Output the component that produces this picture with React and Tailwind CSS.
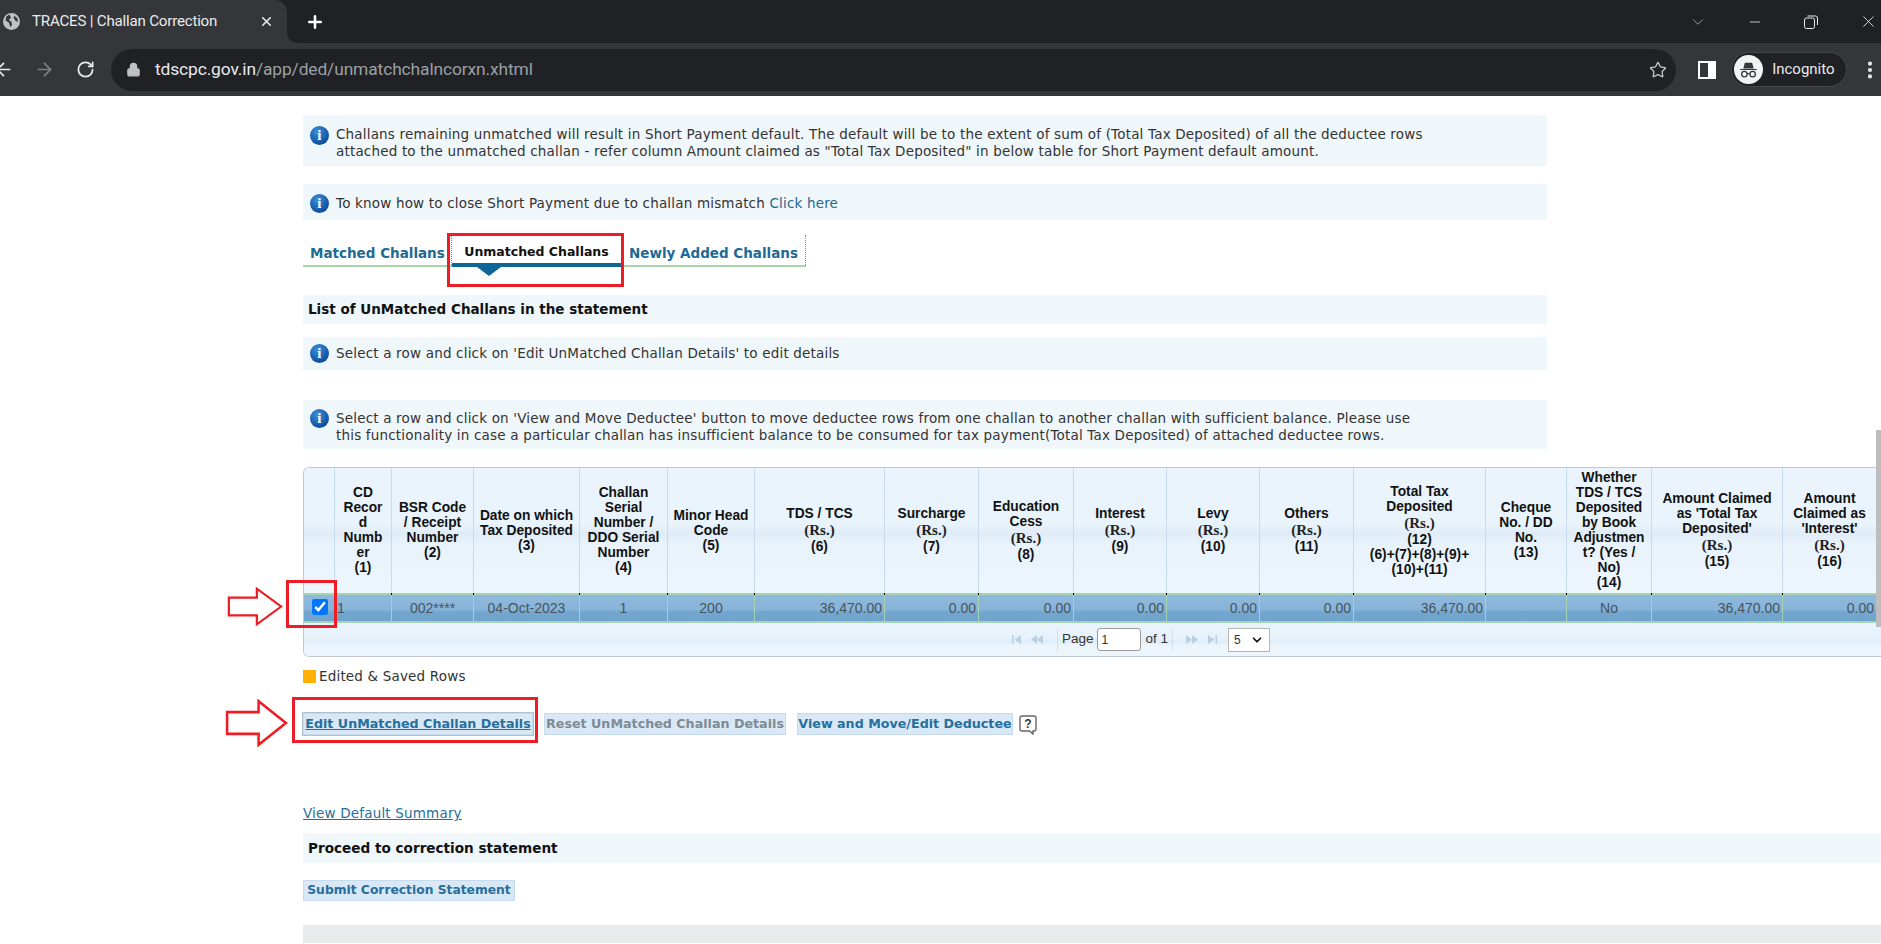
import React from 'react'
import { ArrowLeft, ArrowRight, ChevronDown, EllipsisVertical, Lock, Minus, Plus, RotateCw, Star, X } from 'lucide-react'

const heads = [
  { w: 'w-[31px]', lines: [] },
  { w: 'w-[57px]', lines: ['CD', 'Recor', 'd', 'Numb', 'er', '(1)'] },
  { w: 'w-[82px]', lines: ['BSR Code', '/ Receipt', 'Number', '(2)'] },
  { w: 'w-[106px]', lines: ['Date on which', 'Tax Deposited', '(3)'] },
  { w: 'w-[88px]', lines: ['Challan', 'Serial', 'Number /', 'DDO Serial', 'Number', '(4)'] },
  { w: 'w-[87px]', lines: ['Minor Head', 'Code', '(5)'] },
  { w: 'w-[130px]', lines: ['TDS / TCS', 'Rs', '(6)'] },
  { w: 'w-[94px]', lines: ['Surcharge', 'Rs', '(7)'] },
  { w: 'w-[95px]', lines: ['Education', 'Cess', 'Rs', '(8)'] },
  { w: 'w-[93px]', lines: ['Interest', 'Rs', '(9)'] },
  { w: 'w-[93px]', lines: ['Levy', 'Rs', '(10)'] },
  { w: 'w-[94px]', lines: ['Others', 'Rs', '(11)'] },
  { w: 'w-[132px]', lines: ['Total Tax', 'Deposited', 'Rs', '(12)', '(6)+(7)+(8)+(9)+', '(10)+(11)'] },
  { w: 'w-[81px]', lines: ['Cheque', 'No. / DD', 'No.', '(13)'] },
  { w: 'w-[85px]', lines: ['Whether', 'TDS / TCS', 'Deposited', 'by Book', 'Adjustmen', 't? (Yes /', 'No)', '(14)'] },
  { w: 'w-[131px]', lines: ['Amount Claimed', "as 'Total Tax", "Deposited'", 'Rs', '(15)'] },
  { w: 'w-[94px]', lines: ['Amount', 'Claimed as', "'Interest'", 'Rs', '(16)'] },
]

const row = [
  { v: '1', a: 'text-left pl-[2px]' },
  { v: '002****', a: 'text-center' },
  { v: '04-Oct-2023', a: 'text-center' },
  { v: '1', a: 'text-center' },
  { v: '200', a: 'text-center' },
  { v: '36,470.00', a: 'text-right pr-[2px]' },
  { v: '0.00', a: 'text-right pr-[2px]' },
  { v: '0.00', a: 'text-right pr-[2px]' },
  { v: '0.00', a: 'text-right pr-[2px]' },
  { v: '0.00', a: 'text-right pr-[2px]' },
  { v: '0.00', a: 'text-right pr-[2px]' },
  { v: '36,470.00', a: 'text-right pr-[2px]' },
  { v: '', a: 'text-center' },
  { v: 'No', a: 'text-center' },
  { v: '36,470.00', a: 'text-right pr-[2px]' },
  { v: '0.00', a: 'text-right pr-[2px]' },
]

function InfoIcon({ className = '' }) {
  return (
    <span className={`flex h-[19px] w-[19px] shrink-0 items-center justify-center rounded-full bg-[radial-gradient(circle_at_40%_30%,#3f8fd8,#0b4c9c_75%)] font-['Liberation_Serif',serif] text-[15px] font-bold leading-none text-white ${className}`}>
      i
    </span>
  )
}

function InfoBox({ className, children }) {
  return (
    <div className={`flex w-[1244px] gap-[7px] bg-[#f0f7fb] pl-[7px] text-[13.5px] leading-[17px] tracking-[0.18px] text-[#333] ${className}`}>
      {children}
    </div>
  )
}

function Arrow({ className }) {
  return (
    <svg className={`absolute ${className}`} viewBox="0 0 60 44" preserveAspectRatio="none" fill="#fff" stroke="#ee1c25" strokeWidth="2.4">
      <path d="M2 12 H32 V2 L58 22 L32 42 V32 H2 Z" />
    </svg>
  )
}

function ActionButton({ className, children }) {
  return (
    <span className={`flex h-[22px] items-center justify-center whitespace-nowrap border border-[#c6dcee] bg-[#d9e8f6] text-[12.7px] font-bold ${className}`}>
      {children}
    </span>
  )
}

function PagerArrows({ flip }) {
  return (
    <svg className={`h-[9px] w-[36px] ${flip ? 'rotate-180' : ''}`} viewBox="0 0 36 9" fill="#b9cfe2">
      <path d="M0 0 H1.5 V9 H0 Z M9 0 V9 L2.5 4.5 Z M25 0 V9 L19 4.5 Z M31 0 V9 L25 4.5 Z" />
    </svg>
  )
}

export default function App() {
  return (
    <div className="relative h-[944px] w-full overflow-hidden bg-white font-['DejaVu_Sans',sans-serif]">
      {/* browser chrome */}
      <div className="flex h-[43px] bg-[linear-gradient(#202124_50%,#35363a_50%)] font-['Roboto',sans-serif] text-white">
        <div className="flex w-[287px] items-center rounded-tr-[12px] bg-[#35363a]">
          <svg className="ml-[3px] h-[17px] w-[17px]" viewBox="0 0 16 16">
            <circle cx="8" cy="8" r="8" fill="#bdc1c6" />
            <path d="M6 1.5 L3 3.5 L2.5 7 L5.5 9 L7 13.5 L8.5 11 L8 8.5 L5.5 6.5 L7.5 4.5 Z M10.5 2.5 L13.5 5 L14 8.5 L11.5 7 L10 4.5 Z" fill="#35363a" />
          </svg>
          <span className="ml-[12px] w-[226px] whitespace-nowrap text-[15.1px] tracking-[-0.2px] text-[#e8eaed]">TRACES | Challan Correction</span>
          <X className="ml-[1px] h-[15px] w-[15px] text-[#e8eaed]" strokeWidth={2.5} />
        </div>
        <div className="flex flex-1 items-center rounded-bl-[10px] bg-[#202124]">
          <Plus className="ml-[18px] h-[20px] w-[20px]" strokeWidth={3} />
          <ChevronDown className="ml-[1364px] h-[18px] w-[18px] text-[#bdc1c6]" strokeWidth={1} />
          <Minus className="ml-[40px] h-[16px] w-[16px] text-[#e8eaed]" strokeWidth={1.2} />
          <svg className="ml-[41px] h-[14px] w-[14px]" viewBox="0 0 14 14" fill="none" stroke="#e8eaed" strokeWidth="1">
            <rect x="0.5" y="3" width="10" height="10.5" rx="2" />
            <path d="M3.5 1 H11.5 Q13.5 1 13.5 3 V10" />
          </svg>
          <X className="ml-[41px] h-[19px] w-[19px] text-[#e8eaed]" strokeWidth={1.1} />
        </div>
      </div>
      <div className="flex h-[53px] items-center bg-[#35363a] font-['Roboto',sans-serif] text-[#e8eaed]">
        <ArrowLeft className="ml-[-7px] h-[21px] w-[21px]" strokeWidth={2} />
        <ArrowRight className="ml-[20px] h-[21px] w-[21px] text-[#7d8085]" strokeWidth={2} />
        <RotateCw className="ml-[21px] h-[19px] w-[19px]" strokeWidth={2.2} />
        <div className="ml-[16px] flex h-[42px] w-[1567px] items-center rounded-full bg-[#202124]">
          <Lock className="ml-[15px] h-[15px] w-[15px] text-[#bdc1c6]" fill="#bdc1c6" />
          <span className="ml-[14px] whitespace-nowrap text-[17.4px] tracking-[-0.12px]">
            tdscpc.gov.in<span className="text-[#9aa0a6]">/app/ded/unmatchchalncorxn.xhtml</span>
          </span>
          <Star className="ml-auto mr-[9px] h-[18px] w-[18px] text-[#c4c7c5]" strokeWidth={1.8} />
        </div>
        <span className="ml-[22px] flex h-[18px] w-[18px] justify-start border-[2px] border-r-[8px] border-white" />
        <div className="ml-[15px] flex h-[35px] w-[116px] items-center rounded-full border border-[#44464a] bg-[#202124] pl-[2px]">
          <svg className="h-[29px] w-[29px]" viewBox="0 0 28 28">
            <circle cx="14" cy="14" r="14" fill="#f1f3f4" />
            <path d="M6 13.5 H22 V14.5 H6 Z M9 13 L10.5 7.5 H17.5 L19 13 Z" fill="#35363a" />
            <circle cx="10" cy="18.5" r="2.6" fill="none" stroke="#35363a" strokeWidth="1.2" />
            <circle cx="18" cy="18.5" r="2.6" fill="none" stroke="#35363a" strokeWidth="1.2" />
            <path d="M12.6 18 H15.4" stroke="#35363a" strokeWidth="1.2" />
          </svg>
          <span className="ml-[9px] text-[15px]">Incognito</span>
        </div>
        <EllipsisVertical className="ml-[12px] h-[22px] w-[22px]" strokeWidth={2.6} />
      </div>

      {/* page */}
      <div className="ml-[303px] flex flex-col">
        <InfoBox className="mt-[19px] h-[51px] pt-[11px]">
          <InfoIcon />
          <p>
            Challans remaining unmatched will result in Short Payment default. The default will be to the extent of sum of (Total Tax Deposited) of all the deductee rows<br />
            attached to the unmatched challan - refer column Amount claimed as "Total Tax Deposited" in below table for Short Payment default amount.
          </p>
        </InfoBox>
        <InfoBox className="mt-[18px] h-[36px] items-center pt-[2px]">
          <InfoIcon />
          <p>To know how to close Short Payment due to challan mismatch <span className="text-[#1d6a94]">Click here</span></p>
        </InfoBox>

        <div className="relative mt-[15px] flex h-[32px] w-[503px] items-start border-b-[2px] border-[#a9d4a9] text-[13.5px] font-bold text-[#1d6a94]">
          <span className="h-[30px] w-[149px] whitespace-nowrap border-r border-dotted border-[#888] pl-[7px] pt-[8px]">Matched Challans</span>
          <span className="relative h-[32px] w-[169px] border-b-[4px] border-[#0e6698] pt-[8px] text-center text-[12.5px] text-[#111]">
            Unmatched Challans
            <span className="absolute left-[25px] top-[32px] h-0 w-0 border-x-[12px] border-t-[9px] border-x-transparent border-t-[#0e6698]" />
          </span>
          <span className="h-[30px] flex-1 whitespace-nowrap border-r border-dotted border-[#888] pl-[8px] pt-[8px]">Newly Added Challans</span>
        </div>

        <div className="mt-[28px] flex h-[29px] w-[1244px] items-center bg-[#f0f7fb] pl-[5px] text-[13.5px] font-bold text-[#111]">List of UnMatched Challans in the statement</div>
        <InfoBox className="mt-[13px] h-[33px] items-center">
          <InfoIcon />
          <p>Select a row and click on 'Edit UnMatched Challan Details' to edit details</p>
        </InfoBox>
        <InfoBox className="mt-[30px] h-[49px] pt-[10px]">
          <InfoIcon className="mt-[-1px]" />
          <p>
            Select a row and click on 'View and Move Deductee' button to move deductee rows from one challan to another challan with sufficient balance. Please use<br />
            this functionality in case a particular challan has insufficient balance to be consumed for tax payment(Total Tax Deposited) of attached deductee rows.
          </p>
        </InfoBox>

        {/* table */}
        <div className="mt-[18px] w-[1578px] overflow-hidden rounded-l-[6px] border-y border-l border-[#c3cad1] font-['Liberation_Sans',sans-serif]">
          <div className="flex h-[125px] w-[1573px] bg-[linear-gradient(#ebf4fc_0%,#e9f3fc_45%,#dfecf7_52%,#e8f2fb_60%,#eef6fd_100%)]">
            {heads.map((h, i) => (
              <div key={i} className={`flex h-full flex-col items-center justify-center border-r border-[#c9dbea] pb-[1px] text-center text-[13.75px] font-bold leading-[15px] text-[#111] ${h.w}`}>
                {h.lines.map((l, j) => l === 'Rs'
                  ? <span key={j} className="font-['Liberation_Serif',serif] text-[15px] leading-[18px] text-[#222]">(Rs.)</span>
                  : <span key={j} className="whitespace-nowrap">{l}</span>)}
              </div>
            ))}
          </div>
          <div className="flex h-[30px] w-[1573px] border-y-[2px] border-[#a6d3b4] bg-[linear-gradient(#8fb9dc_0%,#88b4d9_55%,#74a7d0_65%,#70a3cc_100%)] text-[14px] text-[#46545f]">
            <div className="relative flex w-[31px] items-center justify-center border-r border-[#a6d3b4] pb-[2px] pl-[1px] after:absolute after:right-[-1px] after:top-[-2px] after:h-[2px] after:w-[1px] after:bg-black">
              <input type="checkbox" defaultChecked className="h-[16px] w-[16px] accent-[#0075ff]" />
            </div>
            {row.map((c, i) => (
              <div key={i} className={`relative h-full border-r border-[#a6d3b4] leading-[26px] after:absolute after:right-[-1px] after:top-[-2px] after:h-[2px] after:w-[1px] after:bg-black ${heads[i + 1].w} ${c.a}`}>{c.v}</div>
            ))}
          </div>
          <div className="flex h-[33px] items-center bg-[linear-gradient(#e9f3fc_0%,#e8f2fb_45%,#dfecf7_55%,#edf5fc_70%,#eef6fd_100%)] pl-[708px] text-[13.5px] text-[#333]">
            <PagerArrows />
            <span className="ml-[9px] h-[22px] border-l border-[#d3e0ec]" />
            <span className="ml-[4px]">Page</span>
            <span className="ml-[3px] flex h-[23px] w-[44px] items-center rounded-[3px] border border-[#9a9a9a] bg-white pl-[4px] text-[12px]">1</span>
            <span className="ml-[5px]">of 1</span>
            <span className="ml-[4px] h-[22px] border-l border-[#d3e0ec]" />
            <span className="ml-[8px]"><PagerArrows flip /></span>
            <span className="ml-[11px] flex h-[24px] w-[42px] items-center justify-between border border-[#b5b5b5] bg-white px-[5px] text-[12px]">
              5 <ChevronDown className="h-[14px] w-[14px] text-[#111]" strokeWidth={3} />
            </span>
          </div>
        </div>

        <div className="mt-[13px] flex h-[13px] items-center text-[13.5px] tracking-[0.18px] text-[#333]">
          <span className="h-[13px] w-[13px] bg-[#ffb000]" />
          <span className="ml-[3px]">Edited &amp; Saved Rows</span>
        </div>

        <div className="mt-[29px] flex items-center text-[#266f9c]">
          <ActionButton className="w-[230px] border-[#33648f] underline outline outline-1 outline-[#33648f]/40">Edit UnMatched Challan Details</ActionButton>
          <ActionButton className="ml-[11px] w-[242px] text-[#808a92]">Reset UnMatched Challan Details</ActionButton>
          <ActionButton className="ml-[11px] w-[216px]">View and Move/Edit Deductee</ActionButton>
          <svg className="ml-[6px] mt-[3px] h-[20px] w-[18px]" viewBox="0 0 18 20" fill="#fff" stroke="#666" strokeWidth="1.4">
            <path d="M3 1 H15 Q17 1 17 3 V14 Q17 16 15 16 H14 V19 L10.5 16 H3 Q1 16 1 14 V3 Q1 1 3 1 Z" />
            <text x="9" y="13" textAnchor="middle" fontSize="12" fontWeight="700" fill="#333" stroke="none" fontFamily="'Liberation Sans', sans-serif">?</text>
          </svg>
        </div>

        <a className="mt-[70px] text-[13.5px] leading-[16px] tracking-[0.18px] text-[#266f9c] underline">View Default Summary</a>
        <div className="mt-[12px] flex h-[30px] items-center bg-[#f0f7fb] pl-[5px] text-[13.6px] font-bold text-[#111]">Proceed to correction statement</div>
        <span className="mt-[17px] flex h-[21px] w-[212px] items-center justify-center whitespace-nowrap border border-[#c6dcee] bg-[#d9e8f6] text-[12.3px] font-bold text-[#266f9c]">Submit Correction Statement</span>
        <div className="mt-[24px] h-[18px] bg-[#e9eaec]" />
      </div>

      {/* scrollbar thumb */}
      <div className="absolute right-0 top-[430px] h-[197px] w-[5px] bg-[#bdbdbd]" />

      {/* annotations drawn over the page */}
      <div className="absolute left-[447px] top-[233px] h-[54px] w-[177px] border-[3px] border-[#ee1c25]" />
      <div className="absolute left-[286px] top-[580px] h-[48px] w-[51px] border-[3px] border-[#ee1c25]" />
      <div className="absolute left-[292px] top-[697px] h-[46px] w-[246px] border-[3px] border-[#ee1c25]" />
      <Arrow className="left-[227px] top-[587px] h-[39px] w-[56px]" />
      <Arrow className="left-[225px] top-[699px] h-[48px] w-[63px]" />
    </div>
  )
}
